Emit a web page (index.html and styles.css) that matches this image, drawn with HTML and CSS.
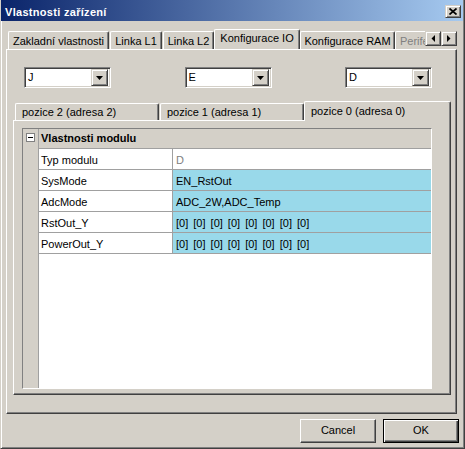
FILE: index.html
```html
<!DOCTYPE html>
<html>
<head>
<meta charset="utf-8">
<title>Vlastnosti zařízení</title>
<link rel="stylesheet" href="styles.css">
</head>
<body>
<div class="window">
  <div class="titlebar">
    <span class="title">Vlastnosti zařízení</span>
    <div class="close raised">
      <svg width="8" height="7" viewBox="0 0 8 7"><path d="M0.5 0.5 L7.5 6.5 M7.5 0.5 L0.5 6.5" stroke="#000" stroke-width="1.7" fill="none"/></svg>
    </div>
  </div>

  <div class="tabstrip">
    <div class="tabs">
      <div class="tab t1">Zakladní vlastnosti</div>
      <div class="tab t2">Linka L1</div>
      <div class="tab t3">Linka L2</div>
      <div class="tab t4 sel">Konfigurace IO</div>
      <div class="tab t5">Konfigurace RAM</div>
      <div class="tab t6 dim">Perife</div>
    </div>
    <div class="scroll">
      <div class="sbtn raised"><svg width="4" height="7" viewBox="0 0 4 7"><polygon points="4,0 4,7 0.5,3.5" fill="#000"/></svg></div>
      <div class="sbtn raised"><svg width="4" height="7" viewBox="0 0 4 7"><polygon points="0,0 0,7 3.5,3.5" fill="#000"/></svg></div>
    </div>
  </div>

  <div class="panel">
    <div class="combos">
      <div class="combo"><span class="combo-text">J</span><span class="combo-btn raised"><svg width="7" height="4" viewBox="0 0 7 4"><polygon points="0,0 7,0 3.5,4" fill="#000"/></svg></span></div>
      <div class="combo"><span class="combo-text">E</span><span class="combo-btn raised"><svg width="7" height="4" viewBox="0 0 7 4"><polygon points="0,0 7,0 3.5,4" fill="#000"/></svg></span></div>
      <div class="combo"><span class="combo-text">D</span><span class="combo-btn raised"><svg width="7" height="4" viewBox="0 0 7 4"><polygon points="0,0 7,0 3.5,4" fill="#000"/></svg></span></div>
    </div>

    <div class="subtabs">
      <div class="stab">pozice 2 (adresa 2)</div>
      <div class="stab s2">pozice 1 (adresa 1)</div>
      <div class="stab sel">pozice 0 (adresa 0)</div>
    </div>

    <div class="subpanel">
      <div class="grid">
        <div class="gmargin"><span class="minus"></span></div>
        <div class="gmain">
          <div class="ghead">Vlastnosti modulu</div>
          <div class="grow"><div class="gname">Typ modulu</div><div class="gval ro">D</div></div>
          <div class="grow"><div class="gname">SysMode</div><div class="gval">EN_RstOut</div></div>
          <div class="grow"><div class="gname">AdcMode</div><div class="gval">ADC_2W,ADC_Temp</div></div>
          <div class="grow"><div class="gname">RstOut_Y</div><div class="gval wide">[0] [0] [0] [0] [0] [0] [0] [0]</div></div>
          <div class="grow"><div class="gname">PowerOut_Y</div><div class="gval wide">[0] [0] [0] [0] [0] [0] [0] [0]</div></div>
        </div>
      </div>
    </div>
  </div>

  <div class="buttons">
    <div class="btn">Cancel</div>
    <div class="btn default">OK</div>
  </div>
</div>
</body>
</html>
```

FILE: styles.css
```css
* { box-sizing: border-box; }

html, body {
  margin: 0;
  padding: 0;
  background: #d4d0c8;
}

body {
  font-family: "Liberation Sans", Arial, sans-serif;
  font-size: 11px;
  color: #000;
}

.window {
  width: 465px;
  height: 449px;
  background: #d4d0c8;
  border-left: 1px solid #d4d0c8;
  border-right: 1px solid #404040;
  border-bottom: 1px solid #404040;
  box-shadow: inset 1px 0 #fff, inset -1px -1px #808080;
  padding: 0 1px 0 0;
  display: flex;
  flex-direction: column;
}

.raised {
  background: #d4d0c8;
  border: 1px solid;
  border-color: #d4d0c8 #404040 #404040 #d4d0c8;
  box-shadow: inset 1px 1px #fff, inset -1px -1px #808080;
  display: flex;
  align-items: center;
  justify-content: center;
}

/* title bar */
.titlebar {
  height: 21px;
  flex: none;
  background: linear-gradient(to right, #0a246a, #a6caf0);
  display: flex;
  align-items: flex-start;
  justify-content: space-between;
}

.title {
  color: #fff;
  font-weight: bold;
  padding: 4px 0 0 4px;
  line-height: 17px;
  letter-spacing: 0.3px;
}

.close {
  width: 16px;
  height: 13px;
  margin: 5px 2px 0 0;
}

/* main tab strip */
.tabstrip {
  flex: none;
  height: 20px;
  margin-top: 8px;
  display: flex;
}

.tabs {
  width: 424px;
  height: 20px;
  padding-left: 7px;
  display: flex;
  align-items: flex-end;
  overflow: hidden;
}

.tab {
  flex: none;
  height: 18px;
  background: #d4d0c8;
  border-top: 1px solid #fff;
  border-left: 1px solid #fff;
  border-right: 1px solid #404040;
  border-radius: 2px 2px 0 0;
  box-shadow: inset -1px 0 #808080;
  padding-top: 2px;
  line-height: 15px;
  text-align: center;
  white-space: nowrap;
}

.t1 { width: 101px; }
.t2 { width: 52px; margin-left: 1px; }
.t3 { width: 51px; margin-left: 1px; }
.t4 { width: 86px; }
.t5 { width: 95px; }
.t6 { width: 40px; text-align: left; padding-left: 4px; }
.dim { color: #808080; }

.tab.sel {
  height: 21px;
  margin-bottom: -1px;
  position: relative;
  z-index: 1;
  padding-top: 1px;
}

.scroll {
  display: flex;
  padding-top: 2px;
}

.sbtn {
  width: 16px;
  height: 15px;
}

/* main panel */
.panel {
  flex: none;
  width: 451px;
  height: 365px;
  margin-left: 5px;
  border: 1px solid;
  border-color: #fff #404040 #404040 #fff;
  box-shadow: inset -1px -1px #808080;
  display: flex;
  flex-direction: column;
}

.combos {
  display: flex;
  justify-content: space-between;
  padding: 0 24px 0 17px;
  margin-top: 17px;
}

.combo {
  width: 87px;
  height: 21px;
  background: #fff;
  border: 1px solid;
  border-color: #808080 #fff #fff #808080;
  box-shadow: inset 1px 1px #404040, inset -1px -1px #d4d0c8;
  padding: 2px;
  display: flex;
  align-items: center;
}

.combo-text {
  flex: 1;
  padding-left: 1px;
  line-height: 15px;
}

.combo-btn {
  width: 17px;
  height: 17px;
}

/* sub tabs */
.subtabs {
  display: flex;
  align-items: flex-end;
  height: 19px;
  margin: 13px 0 0 6px;
  padding-left: 2px;
}

.stab {
  flex: none;
  width: 144px;
  height: 17px;
  background: #d4d0c8;
  border-top: 1px solid #fff;
  border-left: 1px solid #fff;
  border-right: 1px solid #404040;
  border-radius: 2px 2px 0 0;
  box-shadow: inset -1px 0 #808080;
  padding: 1px 0 0 6px;
  line-height: 15px;
  white-space: nowrap;
}

.stab.s2 { margin-left: 1px; }

.stab.sel {
  width: 147px;
  height: 20px;
  margin-bottom: -1px;
  position: relative;
  z-index: 1;
  padding-top: 2px;
}

.subpanel {
  width: 438px;
  height: 275px;
  margin-left: 6px;
  border: 1px solid;
  border-color: #fff #404040 #404040 #fff;
  box-shadow: inset -1px -1px #808080;
  padding: 7px 0 0 8px;
}

/* property grid */
.grid {
  width: 410px;
  height: 261px;
  border: 1px solid;
  border-color: #808080 #fff #fff #808080;
  background: #fff;
  display: flex;
}

.gmargin {
  width: 16px;
  background: #d4d0c8;
  border-right: 1px solid #a0a0a0;
  padding: 4px 0 0 3px;
}

.minus {
  display: block;
  width: 9px;
  height: 9px;
  border: 1px solid #808080;
  background: #fff;
  position: relative;
}

.minus::after {
  content: "";
  position: absolute;
  left: 1px;
  top: 3px;
  width: 5px;
  height: 1px;
  background: #000;
}

.gmain {
  flex: 1;
  display: flex;
  flex-direction: column;
}

.ghead {
  height: 20px;
  background: #d4d0c8;
  border-bottom: 1px solid #a0a0a0;
  font-weight: bold;
  padding-left: 2px;
  line-height: 19px;
}

.grow {
  display: flex;
  height: 21px;
  border-bottom: 1px solid #a0a0a0;
}

.gname {
  width: 134px;
  border-right: 1px solid #a0a0a0;
  padding: 2px 0 0 2px;
  line-height: 18px;
  white-space: nowrap;
}

.gval {
  flex: 1;
  background: #99d9ea;
  padding: 2px 0 0 3px;
  line-height: 18px;
  white-space: nowrap;
}

.gval.wide {
  word-spacing: 2px;
}

.gval.ro {
  background: #fff;
  color: #808080;
}

/* buttons */
.buttons {
  display: flex;
  justify-content: flex-end;
  gap: 7px;
  margin: 5px 4px 0 0;
}

.btn {
  width: 76px;
  height: 24px;
  background: #d4d0c8;
  border: 1px solid;
  border-color: #fff #404040 #404040 #fff;
  box-shadow: inset -1px -1px #808080;
  text-align: center;
  line-height: 21px;
}

.btn.default {
  border-color: #000;
  box-shadow: inset 1px 1px #fff, inset -1px -1px #404040, inset -2px -2px #808080;
}
```
